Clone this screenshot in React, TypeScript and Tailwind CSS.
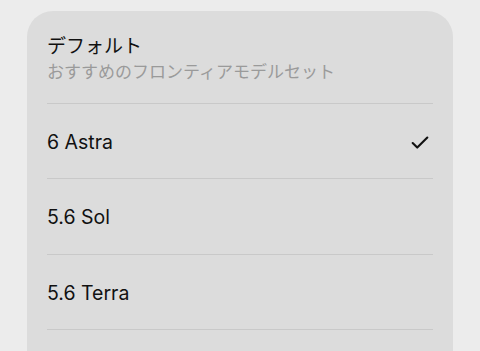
import { Check } from 'lucide-react';

const models = [
  { name: '6 Astra', selected: true },
  { name: '5.6 Sol', selected: false },
  { name: '5.6 Terra', selected: false },
];

export default function App() {
  return (
    <div
      className="min-h-[351px] h-[351px] overflow-hidden bg-[#ececec] px-[27px] pt-[11px]"
      style={{ fontFamily: 'Inter, "Noto Sans CJK JP", sans-serif' }}
    >
      <div className="rounded-t-[26px] bg-[#dcdcdc] px-5 h-[400px]">
        {/* Header */}
        <div className="pt-[23px] pb-[19px] border-b border-[#c9c9c9]">
          <div className="text-[19px] leading-[26px] text-[#111]">デフォルト</div>
          <div className="text-[17px] leading-[24px] text-[#9a9a9a]">おすすめのフロンティアモデルセット</div>
        </div>

        {/* Model list */}
        {models.map((m, i) => (
          <div
            key={m.name}
            className={`flex items-center justify-between border-b border-[#c9c9c9] pt-[3px] ${i === 1 ? 'h-[76px]' : 'h-[75px]'}`}
          >
            <span className="text-[19.5px] text-[#111]">{m.name}</span>
            {m.selected && <Check className="mr-[2px] h-[22px] w-[22px] text-[#111]" strokeWidth={2.3} />}
          </div>
        ))}
      </div>
    </div>
  );
}
